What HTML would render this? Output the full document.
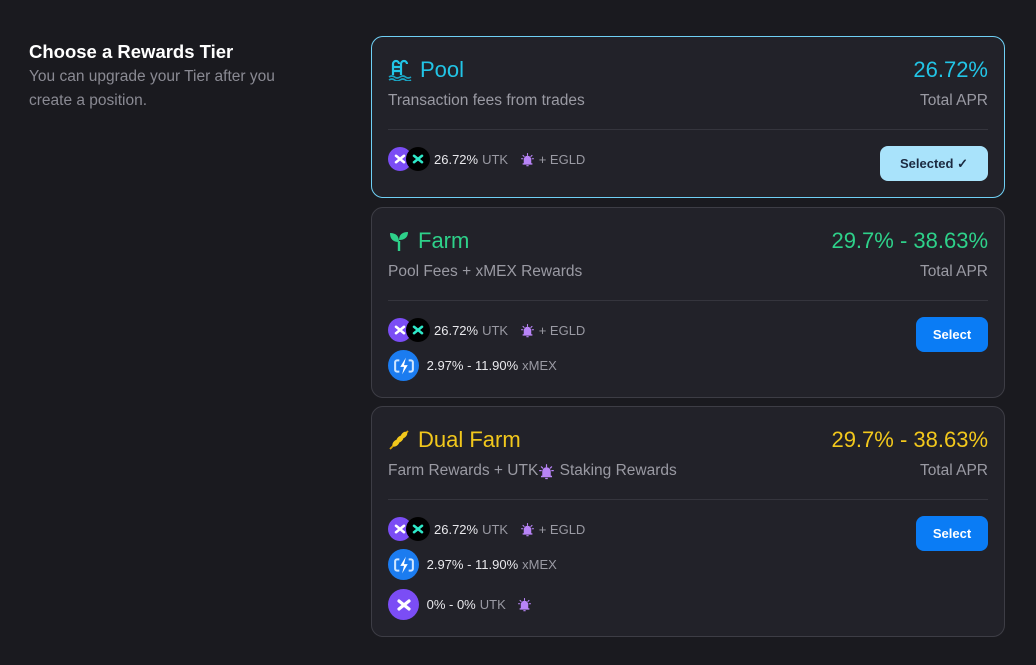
<!DOCTYPE html>
<html><head><style>
*{margin:0;padding:0;box-sizing:border-box}
body{width:1036px;height:665px;background:#1a1a1f;font-family:"Liberation Sans",sans-serif;position:relative;overflow:hidden;color:#fff}
.h{position:absolute;left:29px;top:41px;font-size:18.5px;font-weight:bold;color:#fff}
.sub{position:absolute;left:29px;top:65px;font-size:15.5px;color:#8a8a93;line-height:24px;width:275px}
.card{position:absolute;left:371px;width:634px;background:#222229;border:1px solid #3d3d45;border-radius:12px}
.t{position:absolute;left:16px;top:20px;font-size:22px;display:flex;align-items:center;gap:8px}
.apr{position:absolute;right:16px;top:20px;font-size:22px}
.d{position:absolute;left:16px;top:55px;font-size:15.5px;color:#9a9aa3;display:flex;align-items:center}
.ta{position:absolute;right:16px;top:55px;font-size:15.5px;color:#9a9aa3}
.hr{position:absolute;left:16px;right:16px;top:92px;border-top:1px solid #35353d}
.row{position:absolute;left:16px;display:flex;align-items:center;font-size:13px;color:#e8e8ec;gap:4px}
.row .g{color:#9a9aa3}
.c{width:24px;height:24px;border-radius:50%;display:inline-flex;align-items:center;justify-content:center}
.pu{background:#7b4df5}
.bk{background:#000;margin-left:-10px}
.bl{background:#1b7cf0;width:31px;height:31px}
.p2{width:31px;height:31px}
.btn{position:absolute;right:16px;height:35px;border-radius:8px;font-size:13px;font-weight:bold;display:flex;align-items:center;justify-content:center}
.sel{background:#0a7cf5;color:#fff;width:72px}
</style></head><body>
<svg width="0" height="0" style="position:absolute">
<defs>
<symbol id="x" viewBox="0 0 20 20"><path d="M5 6l10 8M15 6L5 14" stroke="currentColor" stroke-width="3.2" stroke-linecap="round"/></symbol>
<symbol id="bell" viewBox="0 0 20 20"><path d="M5 15V10a5 5 0 0110 0v5zM3.5 15h13v1.8h-13zM8.5 17.5h3v1.5h-3z" fill="#b884f7"/><path d="M10 2v2.5M4 4.5l1.5 1.5M16 4.5L14.5 6M2 9h1.8M16.2 9H18" stroke="#b884f7" stroke-width="1.4" stroke-linecap="round"/></symbol>
<symbol id="bolt" viewBox="0 0 30 30"><path d="M10 9H7.5a2 2 0 00-2 2v8a2 2 0 002 2H10M20 9h2.5a2 2 0 012 2v8a2 2 0 01-2 2H20" stroke="#cfe6ff" stroke-width="2.2" fill="none"/><path d="M17 6l-6 10h4l-2 8 6-10h-4z" fill="#fff"/></symbol>
</defs></svg>
<div class="h">Choose a Rewards Tier</div>
<div class="sub">You can upgrade your Tier after you create a position.</div>

<div class="card" style="top:36px;height:162px;border-color:#6fd0f5">
<div class="t" style="color:#22c5e6"><svg width="24" height="22" viewBox="0 0 24 22"><path d="M5 16V5a3 3 0 016 0M13 16V5a3 3 0 016 0M5 8h8M5 12h8" stroke="#22c5e6" stroke-width="2.2" fill="none"/><path d="M1 18q3-2 5.5 0t5.5 0 5.5 0 5.5 0M1 21q3-2 5.5 0t5.5 0 5.5 0 5.5 0" stroke="#1aa5c4" stroke-width="1.6" fill="none"/></svg>Pool</div>
<div class="apr" style="color:#22c5e6">26.72%</div>
<div class="d">Transaction fees from trades</div>
<div class="ta">Total APR</div>
<div class="hr"></div>
<div class="row" style="top:110px"><span class="c pu"><svg width="16" height="16" style="color:#fff"><use href="#x"/></svg></span><span class="c bk"><svg width="16" height="16" style="color:#2ee8c8"><use href="#x"/></svg></span>26.72% <span class="g">UTK</span>&nbsp;<svg width="15" height="15"><use href="#bell"/></svg><span class="g">+ EGLD</span></div>
<div class="btn" style="top:109px;width:108px;background:#a9e3fb;color:#1b2a40">Selected&nbsp;✓</div>
</div>

<div class="card" style="top:207px;height:191px">
<div class="t" style="color:#2ed18a"><svg width="22" height="22" viewBox="0 0 22 22"><path d="M11 21V11" stroke="#2ed18a" stroke-width="2.4"/><path d="M11 12C5 12 2 9 2 3c6 0 9 3 9 9zM11 10c0-5 3-8 9-8 0 5-3 8-9 8z" fill="#2ed18a"/></svg>Farm</div>
<div class="apr" style="color:#2ed18a">29.7% - 38.63%</div>
<div class="d">Pool Fees + xMEX Rewards</div>
<div class="ta">Total APR</div>
<div class="hr"></div>
<div class="row" style="top:110px"><span class="c pu"><svg width="16" height="16" style="color:#fff"><use href="#x"/></svg></span><span class="c bk"><svg width="16" height="16" style="color:#2ee8c8"><use href="#x"/></svg></span>26.72% <span class="g">UTK</span>&nbsp;<svg width="15" height="15"><use href="#bell"/></svg><span class="g">+ EGLD</span></div>
<div class="row" style="top:142px"><span class="c bl"><svg width="28" height="28"><use href="#bolt"/></svg></span>&nbsp;2.97% - 11.90% <span class="g">xMEX</span></div>
<div class="btn sel" style="top:109px">Select</div>
</div>

<div class="card" style="top:406px;height:231px">
<div class="t" style="color:#f2c81c"><svg width="22" height="22" viewBox="0 0 22 22"><path d="M2 20L20 2" stroke="#e0a500" stroke-width="1.8"/><ellipse cx="8" cy="14" rx="4.5" ry="2.6" transform="rotate(-45 8 14)" fill="#f2c81c"/><ellipse cx="12" cy="10" rx="4.5" ry="2.6" transform="rotate(-45 12 10)" fill="#f2c81c"/><ellipse cx="16" cy="6" rx="4" ry="2.4" transform="rotate(-45 16 6)" fill="#f2c81c"/></svg>Dual Farm</div>
<div class="apr" style="color:#f2c81c">29.7% - 38.63%</div>
<div class="d">Farm Rewards + UTK<svg width="17" height="17"><use href="#bell"/></svg>&nbsp;Staking Rewards</div>
<div class="ta">Total APR</div>
<div class="hr"></div>
<div class="row" style="top:110px"><span class="c pu"><svg width="16" height="16" style="color:#fff"><use href="#x"/></svg></span><span class="c bk"><svg width="16" height="16" style="color:#2ee8c8"><use href="#x"/></svg></span>26.72% <span class="g">UTK</span>&nbsp;<svg width="15" height="15"><use href="#bell"/></svg><span class="g">+ EGLD</span></div>
<div class="row" style="top:142px"><span class="c bl"><svg width="28" height="28"><use href="#bolt"/></svg></span>&nbsp;2.97% - 11.90% <span class="g">xMEX</span></div>
<div class="row" style="top:182px"><span class="c pu p2"><svg width="20" height="20" style="color:#fff"><use href="#x"/></svg></span>&nbsp;0% - 0% <span class="g">UTK</span>&nbsp;<svg width="15" height="15"><use href="#bell"/></svg></div>
<div class="btn sel" style="top:109px">Select</div>
</div>
</body></html>
